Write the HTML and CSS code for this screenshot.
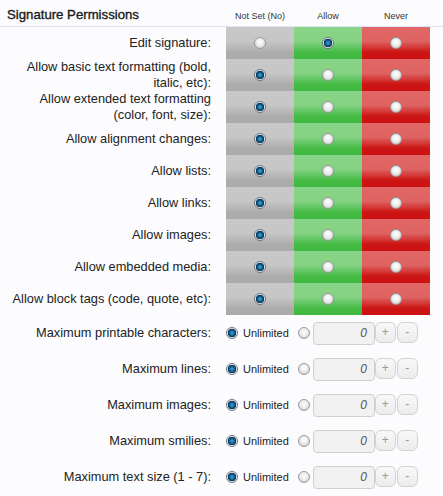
FILE: index.html
```html
<!DOCTYPE html>
<html>
<head>
<meta charset="utf-8">
<link rel="stylesheet" href="styles.css">
</head>
<body>
<div class="page">
  <div class="head">
    <h3 class="title">Signature Permissions</h3>
    <div class="colh">Not Set (No)</div>
    <div class="colh">Allow</div>
    <div class="colh">Never</div>
  </div>

  <div class="perms">
    <div class="row"><div class="label">Edit signature:</div><div class="cell gray"><span class="radio"></span></div><div class="cell green"><span class="radio on"></span></div><div class="cell red"><span class="radio"></span></div></div>
    <div class="row"><div class="label">Allow basic text formatting (bold, italic, etc):</div><div class="cell gray"><span class="radio on"></span></div><div class="cell green"><span class="radio"></span></div><div class="cell red"><span class="radio"></span></div></div>
    <div class="row"><div class="label">Allow extended text formatting (color, font, size):</div><div class="cell gray"><span class="radio on"></span></div><div class="cell green"><span class="radio"></span></div><div class="cell red"><span class="radio"></span></div></div>
    <div class="row"><div class="label">Allow alignment changes:</div><div class="cell gray"><span class="radio on"></span></div><div class="cell green"><span class="radio"></span></div><div class="cell red"><span class="radio"></span></div></div>
    <div class="row"><div class="label">Allow lists:</div><div class="cell gray"><span class="radio on"></span></div><div class="cell green"><span class="radio"></span></div><div class="cell red"><span class="radio"></span></div></div>
    <div class="row"><div class="label">Allow links:</div><div class="cell gray"><span class="radio on"></span></div><div class="cell green"><span class="radio"></span></div><div class="cell red"><span class="radio"></span></div></div>
    <div class="row"><div class="label">Allow images:</div><div class="cell gray"><span class="radio on"></span></div><div class="cell green"><span class="radio"></span></div><div class="cell red"><span class="radio"></span></div></div>
    <div class="row"><div class="label">Allow embedded media:</div><div class="cell gray"><span class="radio on"></span></div><div class="cell green"><span class="radio"></span></div><div class="cell red"><span class="radio"></span></div></div>
    <div class="row"><div class="label">Allow block tags (code, quote, etc):</div><div class="cell gray"><span class="radio on"></span></div><div class="cell green"><span class="radio"></span></div><div class="cell red"><span class="radio"></span></div></div>
  </div>

  <div class="limits">
    <div class="lrow"><div class="label">Maximum printable characters:</div><div class="ctrl"><span class="radio on"></span><span class="unl">Unlimited</span><span class="radio"></span><span class="num">0</span><span class="btn">+</span><span class="btn">-</span></div></div>
    <div class="lrow"><div class="label">Maximum lines:</div><div class="ctrl"><span class="radio on"></span><span class="unl">Unlimited</span><span class="radio"></span><span class="num">0</span><span class="btn">+</span><span class="btn">-</span></div></div>
    <div class="lrow"><div class="label">Maximum images:</div><div class="ctrl"><span class="radio on"></span><span class="unl">Unlimited</span><span class="radio"></span><span class="num">0</span><span class="btn">+</span><span class="btn">-</span></div></div>
    <div class="lrow"><div class="label">Maximum smilies:</div><div class="ctrl"><span class="radio on"></span><span class="unl">Unlimited</span><span class="radio"></span><span class="num">0</span><span class="btn">+</span><span class="btn">-</span></div></div>
    <div class="lrow"><div class="label">Maximum text size (1 - 7):</div><div class="ctrl"><span class="radio on"></span><span class="unl">Unlimited</span><span class="radio"></span><span class="num">0</span><span class="btn">+</span><span class="btn">-</span></div></div>
  </div>
</div>
</body>
</html>
```

FILE: styles.css
```css
html, body {
  margin: 0;
  padding: 0;
  background: #fcfcfe;
}
.page {
  width: 443px;
  height: 496px;
  overflow: hidden;
  font-family: "Liberation Sans", Arial, sans-serif;
  color: #222;
}
.head {
  display: grid;
  grid-template-columns: 226px 68px 68px 68px;
  height: 26px;
  border-bottom: 1px solid #dce5f3;
  align-items: center;
}
.title {
  margin: 0;
  padding: 2px 0 0 7px;
  font-size: 13.2px;
  font-weight: normal;
  color: #1a1a1a;
  -webkit-text-stroke: 0.35px #1a1a1a;
}
.colh {
  text-align: center;
  font-size: 9px;
  color: #333;
  padding-top: 5px;
}
.row {
  display: grid;
  grid-template-columns: 226px 68px 68px 68px;
  height: 32px;
}
.label {
  box-sizing: border-box;
  padding: 0 15px 0 7px;
  text-align: right;
  font-size: 12.8px;
  line-height: 16px;
  display: flex;
  align-items: center;
  justify-content: flex-end;
}
.cell {
  display: flex;
  align-items: center;
  justify-content: center;
}
.gray {
  background: linear-gradient(to bottom, #c8c8c8 0%, #c6c6c6 45%, #adadad 78%, #a9a9a9 100%);
}
.green {
  background: linear-gradient(to bottom, #88d488 0%, #84d284 45%, #46bb46 78%, #40b940 100%);
}
.red {
  background: linear-gradient(to bottom, #e06767 0%, #df6262 45%, #cd1616 78%, #cc1010 100%);
}
.radio {
  box-sizing: border-box;
  width: 12px;
  height: 12px;
  border-radius: 50%;
  border: 1px solid #9a9a9a;
  background: radial-gradient(circle at 50% 40%, #ffffff 0%, #f2f2f2 35%, #d2d2d2 80%, #c2c2c2 100%);
  display: inline-block;
  flex: none;
}
.radio.on {
  border-color: #6d7780;
  background: radial-gradient(circle at 50% 50%, #4fb0e6 0px, #1d78b0 1.6px, #0e4a74 3.2px, #0c3350 4px, #f4f4f4 4.6px, #e2e2e2 6px);
}
.limits {
  display: flex;
  flex-direction: column;
}
.lrow {
  display: grid;
  grid-template-columns: 226px 1fr;
  height: 36px;
}
.ctrl {
  display: flex;
  align-items: center;
}
.unl {
  font-size: 11px;
  color: #222;
  margin-left: 5px;
  margin-right: 9px;
}
.num {
  box-sizing: border-box;
  width: 62px;
  height: 23px;
  margin-left: 3px;
  border: 1px solid #cfcfcf;
  border-radius: 4px;
  background: #f1f1f1;
  font-size: 12px;
  font-style: italic;
  color: #555;
  text-align: right;
  padding-right: 7px;
  line-height: 21px;
}
.btn {
  box-sizing: border-box;
  width: 21px;
  height: 21px;
  margin-bottom: 2px;
  border: 1px solid #d2d2d2;
  border-radius: 6px;
  background: linear-gradient(to bottom, #f8f8f8, #ececec);
  font-size: 12px;
  color: #999;
  display: flex;
  align-items: center;
  justify-content: center;
}
.btn + .btn {
  margin-left: 1px;
}
```
